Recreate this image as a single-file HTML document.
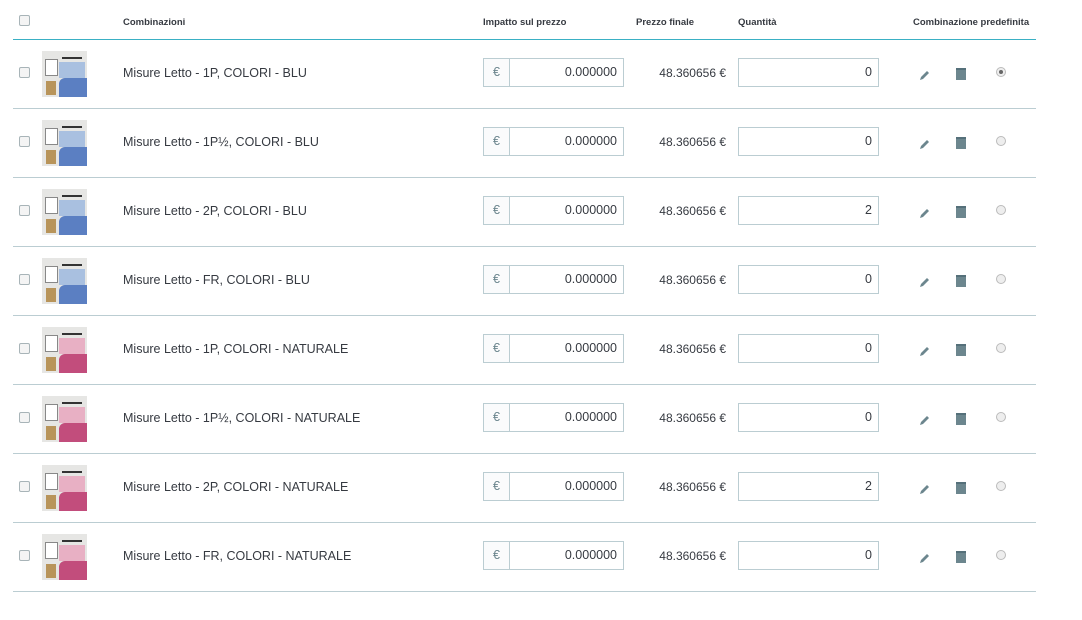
<!DOCTYPE html>
<html><head><meta charset="utf-8"><style>
*{margin:0;padding:0;box-sizing:border-box}
body{width:1082px;height:620px;background:#fff;font-family:"Liberation Sans",sans-serif;color:#363a41;position:relative;overflow:hidden}
.a{position:absolute}
.h{font-size:9.5px;font-weight:bold;color:#363a41;top:17px}
.cb{width:11px;height:11px;border:1px solid #a8b4b8;border-radius:2px;background:#f4f4f4}
.ln{height:1px;background:#bbcdd2;left:13px;width:1023px}
.nm{font-size:12.5px;left:123px}
.inp{border:1px solid #bbcdd2;height:29px;background:#fff;font-size:12.5px}
.img{width:45px;height:46px;background:#e6e6e4;overflow:hidden}
.img div{position:absolute}
</style></head><body>
<div class="a cb" style="left:19px;top:15px"></div>
<div class="a h" style="left:123px">Combinazioni</div>
<div class="a h" style="left:483px">Impatto sul prezzo</div>
<div class="a h" style="left:636px">Prezzo finale</div>
<div class="a h" style="left:738px">Quantità</div>
<div class="a h" style="left:913px">Combinazione predefinita</div>
<div class="a" style="left:13px;top:39px;width:1023px;height:1px;background:#3ab0c4"></div>
<div id="rows"></div>
<script>
var names=["1P, COLORI - BLU","1P½, COLORI - BLU","2P, COLORI - BLU","FR, COLORI - BLU","1P, COLORI - NATURALE","1P½, COLORI - NATURALE","2P, COLORI - NATURALE","FR, COLORI - NATURALE"];
var q=[0,0,2,0,0,0,2,0];var h="";
for(var i=0;i<8;i++){var c=73+69*i;var col=i<4?"#5b7fc2":"#c24d7c";var pil=i<4?"#a9c0e0":"#e8b0c4";
h+='<div class="a cb" style="left:19px;top:'+(c-6)+'px"></div>';
h+='<div class="a img" style="left:42px;top:'+(c-22)+'px"><div style="left:3px;top:8px;width:13px;height:17px;background:#fff;border:1px solid #888"></div><div style="left:17px;top:11px;width:26px;height:16px;background:'+pil+'"></div><div style="left:20px;top:1px;width:20px;height:7px;border-bottom:2px solid #333"></div><div style="left:17px;top:27px;width:28px;height:19px;background:'+col+';border-radius:6px 0 0 0"></div><div style="left:4px;top:30px;width:10px;height:14px;background:#b8945a"></div></div>';
h+='<div class="a nm" style="top:'+(c-7)+'px">Misure Letto - '+names[i]+'</div>';
h+='<div class="a inp" style="left:483px;top:'+(c-15)+'px;width:141px"><div class="a" style="left:0;top:0;width:26px;height:27px;border-right:1px solid #bbcdd2;background:#fafbfc;color:#6c868e;text-align:center;line-height:27px">€</div><div class="a" style="right:6px;top:0;line-height:27px">0.000000</div></div>';
h+='<div class="a" style="left:620px;width:106px;text-align:right;font-size:12px;top:'+(c-7)+'px">48.360656 €</div>';
h+='<div class="a inp" style="left:738px;top:'+(c-15)+'px;width:141px"><div class="a" style="right:6px;top:0;line-height:27px">'+q[i]+'</div></div>';
h+='<svg class="a" style="left:919px;top:'+(c-4)+'px" width="12" height="12" viewBox="0 0 12 12"><path d="M1 11 L2 8 L8 2 L10 4 L4 10 Z" fill="#6c868e"/></svg>';
h+='<div class="a" style="left:956px;top:'+(c-5)+'px;width:10px;height:12px;background:#6c868e;border-top:2px solid #55707a"></div>';
h+='<div class="a" style="left:996px;top:'+(c-6)+'px;width:10px;height:10px;border-radius:50%;border:1px solid #bbb;background:#eee">'+(i==0?'<div class="a" style="left:2px;top:2px;width:4px;height:4px;border-radius:50%;background:#666"></div>':'')+'</div>';
h+='<div class="a ln" style="top:'+(c+35)+'px"></div>';}
document.getElementById("rows").innerHTML=h;
</script>
</body></html>
